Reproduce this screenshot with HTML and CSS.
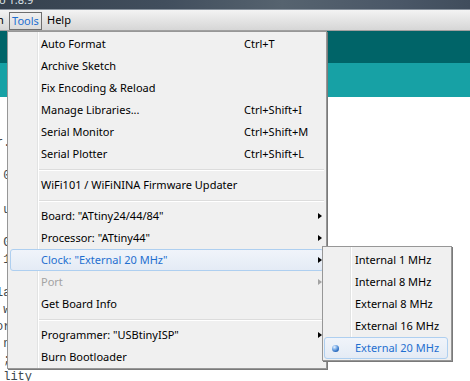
FILE: index.html
```html
<!DOCTYPE html>
<html>
<head>
<meta charset="utf-8">
<link rel="stylesheet" href="styles.css">
</head>
<body>
<div class="titlebar"><span class="title">o 1.8.9</span></div>
<div class="menubar">
  <span class="mb-cut">h</span>
  <span class="mb-tools">Tools</span>
  <span class="mb-help">Help</span>
</div>
<div class="main">
  <div class="toolbar"></div>
  <div class="tabs"></div>
  <div class="editor">
    <div class="code">
      <div class="ln">r.</div>
      <div class="ln"> </div>
      <div class="ln"> 0</div>
      <div class="ln"> </div>
      <div class="ln"> u</div>
      <div class="ln"> </div>
      <div class="ln"> G</div>
      <div class="ln"> 1</div>
      <div class="ln"> </div>
      <div class="ln">la</div>
      <div class="ln"> w</div>
      <div class="ln">or</div>
      <div class="ln"> n</div>
      <div class="ln"> ;</div>
      <div class="ln"> lity</div>
    </div>
  </div>

  <div class="menu">
    <div class="item"><span class="label">Auto Format</span><span class="key">Ctrl+T</span><span></span></div>
    <div class="item"><span class="label">Archive Sketch</span><span class="key"></span><span></span></div>
    <div class="item"><span class="label">Fix Encoding &amp; Reload</span><span class="key"></span><span></span></div>
    <div class="item"><span class="label">Manage Libraries...</span><span class="key">Ctrl+Shift+I</span><span></span></div>
    <div class="item"><span class="label">Serial Monitor</span><span class="key">Ctrl+Shift+M</span><span></span></div>
    <div class="item"><span class="label">Serial Plotter</span><span class="key">Ctrl+Shift+L</span><span></span></div>
    <div class="sep"></div>
    <div class="item"><span class="label">WiFi101 / WiFiNINA Firmware Updater</span><span class="key"></span><span></span></div>
    <div class="sep"></div>
    <div class="item"><span class="label">Board: "ATtiny24/44/84"</span><span class="key"></span><span class="arrow"></span></div>
    <div class="item"><span class="label">Processor: "ATtiny44"</span><span class="key"></span><span class="arrow"></span></div>
    <div class="item hl"><span class="label">Clock: "External 20 MHz"</span><span class="key"></span><span class="arrow"></span></div>
    <div class="item disabled"><span class="label">Port</span><span class="key"></span><span class="arrow"></span></div>
    <div class="item"><span class="label">Get Board Info</span><span class="key"></span><span></span></div>
    <div class="sep"></div>
    <div class="item"><span class="label">Programmer: "USBtinyISP"</span><span class="key"></span><span class="arrow"></span></div>
    <div class="item"><span class="label">Burn Bootloader</span><span class="key"></span><span></span></div>
  </div>

  <div class="submenu">
    <div class="sitem"><span class="radio-slot"></span><span class="slabel">Internal 1 MHz</span></div>
    <div class="sitem"><span class="radio-slot"></span><span class="slabel">Internal 8 MHz</span></div>
    <div class="sitem"><span class="radio-slot"></span><span class="slabel">External 8 MHz</span></div>
    <div class="sitem"><span class="radio-slot"></span><span class="slabel">External 16 MHz</span></div>
    <div class="sitem hl"><span class="radio-slot"><span class="radio"></span></span><span class="slabel">External 20 MHz</span></div>
  </div>
</div>
</body>
</html>
```

FILE: styles.css
```css
* { box-sizing: border-box; margin: 0; padding: 0; }
html, body { width: 470px; height: 381px; overflow: hidden; }
body {
  font-family: "Noto Sans", "Open Sans", sans-serif;
  font-size: 11px;
  background: #ffffff;
  color: #000;
}

.titlebar {
  height: 10px;
  background: linear-gradient(to right, #35414e 0%, #414e5d 35%, #56636f 60%, #4a5767 85%, #404d5c 100%);
  border-bottom: 1px solid #8b95a0;
  overflow: hidden;
}
.title {
  display: block;
  color: #dfe5ea;
  font-size: 11px;
  line-height: 16px;
  margin-top: -8px;
  margin-left: -1px;
  white-space: pre;
}

.menubar {
  height: 21px;
  background: linear-gradient(#f3f3f3, #d6d6d6);
  border-bottom: 1px solid #a0a0a0;
  display: flex;
  align-items: flex-start;
  overflow: hidden;
}
.mb-cut {
  width: 9px;
  overflow: hidden;
  line-height: 20px;
  white-space: nowrap;
  text-indent: -3px;
}
.mb-tools {
  margin-top: 2px;
  width: 33px;
  height: 18px;
  border: 1px solid #6e6e6e;
  background: linear-gradient(#f0f0f0, #dcdcdc);
  color: #1f6fd0;
  line-height: 16px;
  text-align: center;
}
.mb-help {
  margin-left: 5px;
  line-height: 20px;
}

.main {
  position: relative;
  height: 350px;
}
.toolbar { height: 32px; background: #006468; }
.tabs { height: 34px; background: #17a1a5; }
.editor { background: #fff; height: 284px; overflow: hidden; }
.code {
  font-family: "Liberation Mono", monospace;
  font-size: 12px;
  color: #3c474c;
  line-height: 16.75px;
  padding-top: 37.5px;
  margin-left: -4px;
}
.ln { white-space: pre; height: 16.75px; }

.menu {
  position: absolute;
  left: 7px;
  top: 0;
  width: 320px;
  background: #f0f0f0;
  border: 1px solid #979797;
  box-shadow: 1px 1px 0 #7a7a7a;
  padding: 1px 2px 0;
}
.menu::before {
  content: "";
  position: absolute;
  left: 29px;
  top: 0;
  bottom: 0;
  width: 2px;
  background: linear-gradient(to right, #e2e3e3 1px, #ffffff 1px);
}
.item {
  position: relative;
  display: grid;
  grid-template-columns: 233px 1fr 5px;
  align-items: center;
  height: 22px;
  border: 1px solid transparent;
  border-radius: 3px;
  white-space: nowrap;
}
.label { padding-left: 30px; line-height: 20px; }
.key { line-height: 20px; }
.arrow {
  width: 0;
  height: 0;
  border-left: 4px solid #000;
  border-top: 3.5px solid transparent;
  border-bottom: 3.5px solid transparent;
}
.item.disabled .label { color: #a3a3a3; }
.item.disabled .arrow { border-left-color: #a3a3a3; }
.item.hl, .sitem.hl {
  border-color: #aecff0;
  background: linear-gradient(#f0f4fa, #e4ebf5);
  color: #1f6fd0;
}
.sep {
  position: relative;
  height: 9px;
  margin-left: 29px;
  background:
    linear-gradient(#dcdcdc, #dcdcdc) 0 4px / 100% 1px no-repeat,
    linear-gradient(#ffffff, #ffffff) 0 5px / 100% 1px no-repeat;
}

.submenu {
  position: absolute;
  left: 322px;
  top: 215px;
  width: 130px;
  background: #f0f0f0;
  border: 1px solid #979797;
  box-shadow: 1px 1px 0 #7a7a7a;
  padding: 2px 3px 1px 1px;
}
.submenu::before {
  content: "";
  position: absolute;
  left: 27px;
  top: 0;
  bottom: 0;
  width: 2px;
  background: linear-gradient(to right, #e2e3e3 1px, #ffffff 1px);
}
.sitem {
  position: relative;
  display: grid;
  grid-template-columns: 30px 1fr;
  align-items: center;
  height: 22px;
  border: 1px solid transparent;
  border-radius: 3px;
  white-space: nowrap;
}
.slabel { line-height: 20px; }
.radio-slot { display: flex; align-items: center; height: 20px; padding-left: 7px; }
.radio {
  width: 7px;
  height: 7px;
  border-radius: 50%;
  background: radial-gradient(circle at 35% 30%, #e8f2ff 0, #7fb0e8 35%, #2a6bc0 70%, #1a4c90 100%);
}
```
